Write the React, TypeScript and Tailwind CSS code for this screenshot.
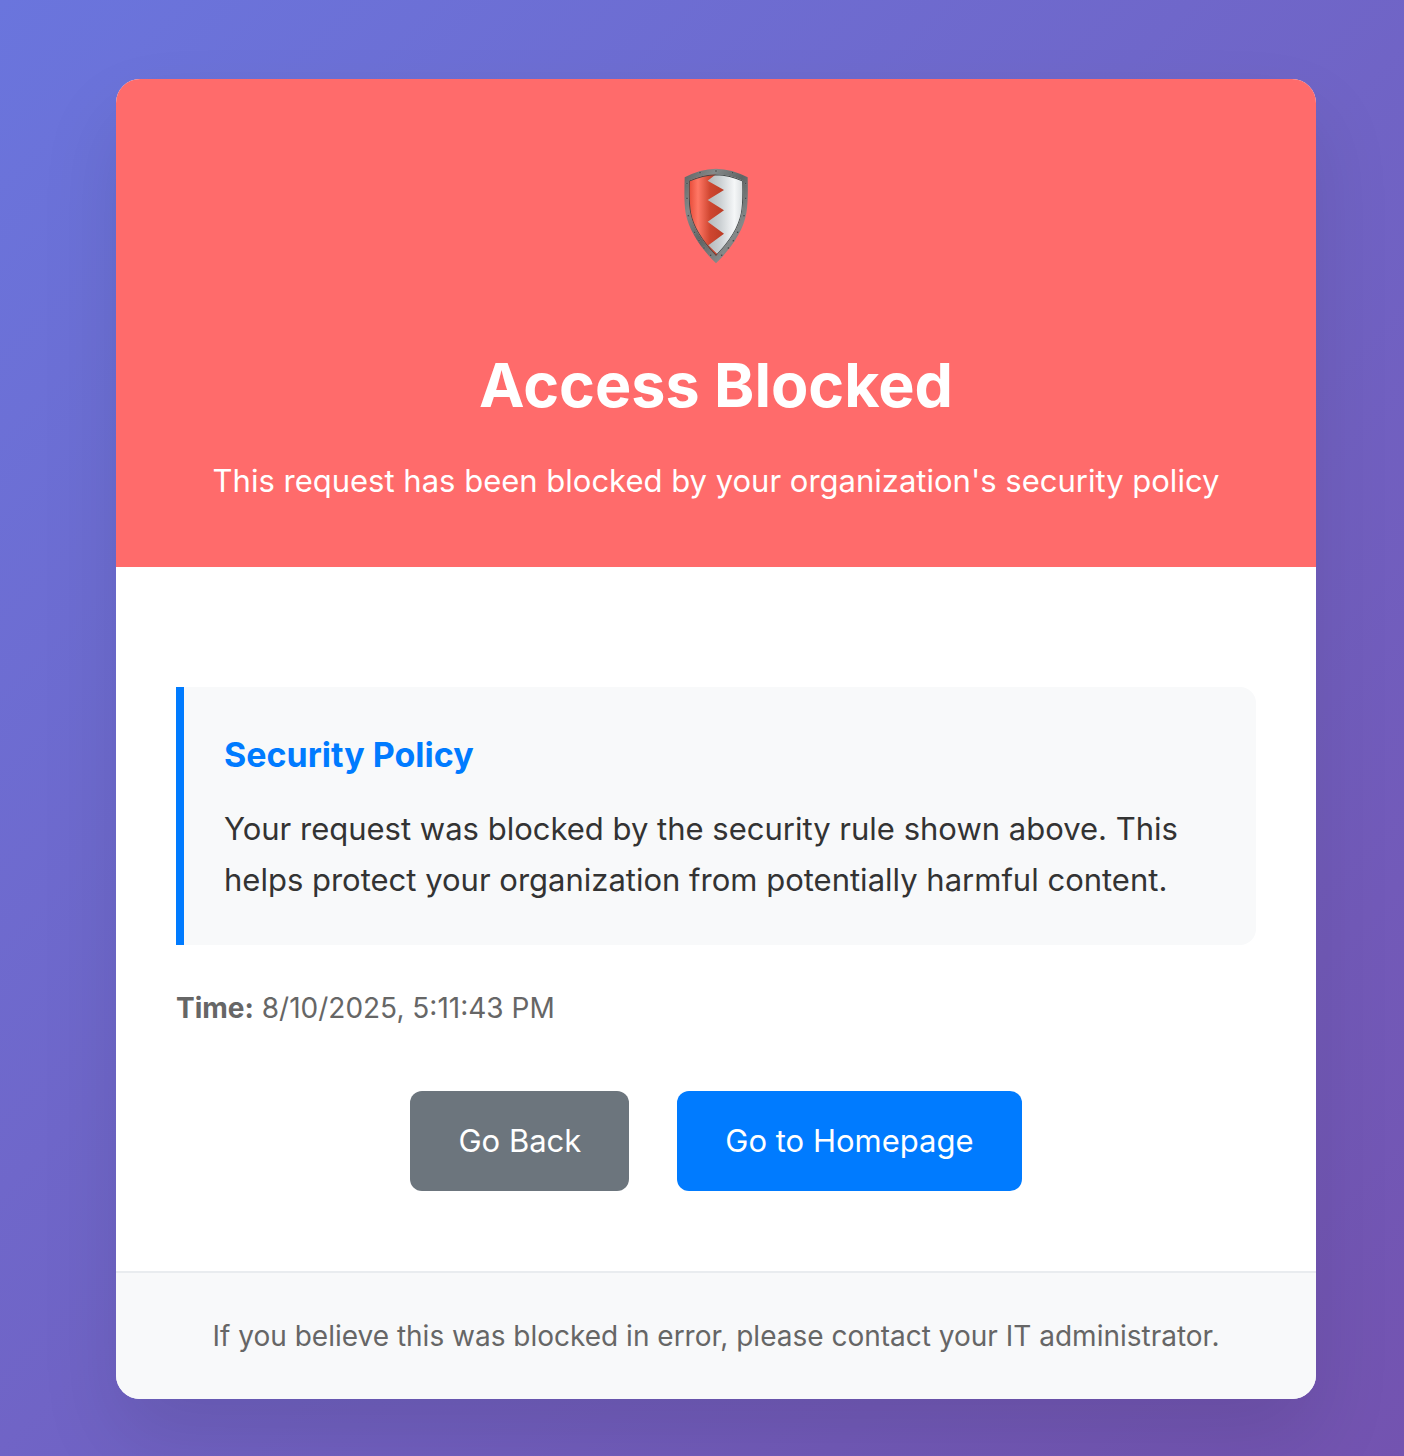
export default function App() {
  return (
    <div className="flex min-h-screen items-start justify-center bg-linear-135 from-[#6a75dd] to-[#7353b0] pt-[79px] pr-[88px] pb-[57px] pl-[116px] font-[Inter,'Liberation_Sans',sans-serif] text-[#333333]">
      <main className="w-full max-w-[1200px] overflow-hidden rounded-3xl bg-white shadow-[0_40px_80px_rgba(0,0,0,0.1)]">
        <header className="flex flex-col items-center bg-[#ff6b6b] px-[60px] pt-[89px] pb-[60px] text-center text-white">
          <Shield />
          <h1 className="mt-[83px] text-[61px] leading-[76px] font-bold">Access Blocked</h1>
          <p className="mt-8 text-[31px] leading-[52px]">This request has been blocked by your organization's security policy</p>
        </header>
        <div className="px-[60px] pt-[120px] pb-20">
          <section className="rounded-r-2xl border-l-8 border-[#007bff] bg-[#f8f9fa] px-10 py-10">
            <h2 className="text-[34px] leading-[56px] font-bold text-[#007bff]">Security Policy</h2>
            <p className="mt-5 text-[31px] leading-[51px]">Your request was blocked by the security rule shown above. This helps protect your organization from potentially harmful content.</p>
          </section>
          <p className="mt-10 text-[28px] leading-[46px] text-[#666666]"><strong className="font-bold">Time:</strong> 8/10/2025, 5:11:43 PM</p>
          <div className="mt-[60px] flex flex-wrap justify-center gap-12">
            <button type="button" className="rounded-xl bg-[#6c757d] px-12 py-6 text-[31px] leading-[52px] text-white">Go Back</button>
            <button type="button" className="rounded-xl bg-[#007bff] px-12 py-6 text-[31px] leading-[52px] text-white">Go to Homepage</button>
          </div>
        </div>
        <footer className="border-t-2 border-[#e9ecef] bg-[#f8f9fa] px-[60px] py-10 text-center text-[28px] leading-[46px] text-[#666666]">If you believe this was blocked in error, please contact your IT administrator.</footer>
      </main>
    </div>
  );
}

const rivets = [
  [90, 53], [138, 48], [188, 53], [51, 85], [227, 85], [51, 130], [227, 130],
  [55, 182], [222, 182], [74, 232], [203, 232], [87, 257], [190, 257], [102, 279], [175, 279], [122, 301], [155, 301],
];

function Shield() {
  return (
    <svg className="h-24 w-16" viewBox="42 39 192 288" aria-hidden="true">
      <defs>
        <linearGradient id="rim" x1="0" y1="0" x2="1" y2="1">
          <stop offset="0" stopColor="#5f6262" />
          <stop offset="0.25" stopColor="#858989" />
          <stop offset="0.5" stopColor="#606464" />
          <stop offset="0.75" stopColor="#858989" />
          <stop offset="1" stopColor="#505353" />
        </linearGradient>
        <linearGradient id="red" gradientUnits="userSpaceOnUse" x1="58" y1="0" x2="162" y2="0">
          <stop offset="0" stopColor="#e84d3a" />
          <stop offset="0.25" stopColor="#ff7765" />
          <stop offset="0.6" stopColor="#cf4630" />
          <stop offset="1" stopColor="#bb3c25" />
        </linearGradient>
        <linearGradient id="silver" gradientUnits="userSpaceOnUse" x1="113" y1="0" x2="220" y2="0">
          <stop offset="0" stopColor="#b4b8ba" />
          <stop offset="0.35" stopColor="#cbd0d3" />
          <stop offset="0.75" stopColor="#f5f7f8" />
          <stop offset="1" stopColor="#d9dddf" />
        </linearGradient>
        <clipPath id="face">
          <path d="M57 77Q98 59 138 58Q180 59 219 77C220 112 221 146 215 175C206 222 176 264 138 303C101 264 70 222 61 175C55 146 56 112 57 77Z" />
        </clipPath>
      </defs>
      <path d="M44 67Q90 42 138 41Q186 42 233 67C234 108 234 145 229 175C220 227 184 280 138 325C92 280 57 227 47 175C42 145 43 108 44 67Z" fill="url(#rim)" />
      <g clipPath="url(#face)">
        <path d="M40 40H240V325H40Z" fill="url(#silver)" />
        <path d="M40 40H160L138 58L113 77L162 105L113 135L162 166L113 200L162 236L115 271L150 305H40Z" fill="url(#red)" />
        <path d="M57 77Q98 59 138 58Q180 59 219 77C220 112 221 146 215 175C206 222 176 264 138 303C101 264 70 222 61 175C55 146 56 112 57 77Z" fill="none" stroke="#444848" strokeWidth="5" />
      </g>
      {rivets.map(([x, y]) => (
        <circle key={`${x}-${y}`} cx={x} cy={y} r="3" fill="#3c4042" stroke="#a4a8a8" strokeWidth="1" />
      ))}
    </svg>
  );
}
